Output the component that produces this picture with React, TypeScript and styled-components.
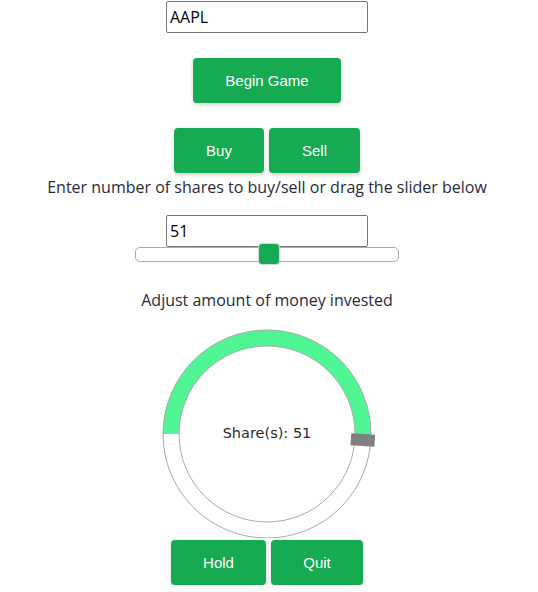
import React from "react";
import styled, { createGlobalStyle } from "styled-components";

const GlobalStyle = createGlobalStyle`
  body {
    margin: 0;
    background: #ffffff;
  }
`;

const Page = styled.div`
  align-items: center;
  display: flex;
  flex-direction: column;
  padding-top: 1px;
  width: 534px;
`;

const TextBox = styled.input`
  border: 1px solid #767676;
  border-radius: 2px;
  box-sizing: border-box;
  color: #000000;
  font-family: "Open Sans", sans-serif;
  font-size: 16px;
  height: 32px;
  margin: 0;
  padding: 0 3px;
  width: 202px;
`;

const GreenButton = styled.button<{ $width: number }>`
  background-color: #16aa53;
  border: none;
  border-radius: 4px;
  box-shadow: 0 2px 4px rgba(0, 0, 0, 0.18);
  color: #ffffff;
  font-family: "Liberation Sans", Arial, sans-serif;
  font-size: 15px;
  height: 45px;
  padding: 0;
  width: ${(p) => p.$width}px;
`;

const ButtonRow = styled.div<{ $top: number }>`
  display: flex;
  gap: 5px;
  margin-top: ${(p) => p.$top}px;
`;

const BeginWrap = styled.div`
  margin-top: 25px;
`;

const Caption = styled.p<{ $top: number }>`
  color: #2a2a3a;
  font-family: "Open Sans", sans-serif;
  font-size: 16px;
  line-height: 20px;
  margin: ${(p) => p.$top}px 0 0;
  white-space: nowrap;
`;

const SharesBox = styled(TextBox)`
  margin-top: 18px;
`;

const Track = styled.div`
  background: #ffffff;
  border: 1px solid #aaaaaa;
  border-radius: 5px;
  box-sizing: border-box;
  height: 15px;
  position: relative;
  width: 264px;
`;

const Thumb = styled.div`
  background: #16aa53;
  border: 1px solid #d8d8d8;
  border-radius: 4px;
  box-sizing: border-box;
  height: 22px;
  position: absolute;
  top: -5px;
  width: 22px;
`;

const Dial = styled.div`
  display: grid;
  margin-top: 16px;
  place-items: center;
  & > * {
    grid-area: 1 / 1;
  }
`;

const DialLabel = styled.span`
  color: #2a2a2a;
  font-family: "DejaVu Sans", Verdana, sans-serif;
  font-size: 14.5px;
  margin-top: 2px;
`;

const polar = (r: number, deg: number) => {
  const a = (deg * Math.PI) / 180;
  return [108 + r * Math.cos(a), 108 + r * Math.sin(a)];
};

const RingArc: React.FC<{ value: number; max: number }> = ({ value, max }) => {
  const outer = 104;
  const inner = 88;
  const start = 180;
  const end = start + (360 * value) / max;
  const large = end - start > 180 ? 1 : 0;
  const [ox1, oy1] = polar(outer, start);
  const [ox2, oy2] = polar(outer, end);
  const [ix1, iy1] = polar(inner, end);
  const [ix2, iy2] = polar(inner, start);
  const d = `M${ox1} ${oy1} A${outer} ${outer} 0 ${large} 1 ${ox2} ${oy2} L${ix1} ${iy1} A${inner} ${inner} 0 ${large} 0 ${ix2} ${iy2} Z`;
  const [hx, hy] = polar(96, end);
  return (
    <svg width="216" height="212" viewBox="0 0 216 212">
      <path d={d} fill="#4ff593" />
      <circle cx="108" cy="108" r={outer} fill="none" stroke="#aaaaaa" strokeWidth="1" />
      <circle cx="108" cy="108" r={inner} fill="none" stroke="#aaaaaa" strokeWidth="1" />
      <rect
        x={hx - 12}
        y={hy - 6}
        width="24"
        height="12"
        fill="#808080"
        transform={`rotate(${end - 360} ${hx} ${hy})`}
      />
    </svg>
  );
};

export default function App() {
  const shares = 51;
  const max = 100;
  const trackWidth = 264;
  const thumbWidth = 22;

  return (
    <Page>
      <GlobalStyle />
      <TextBox defaultValue="AAPL" />
      <BeginWrap>
        <GreenButton $width={148}>Begin Game</GreenButton>
      </BeginWrap>
      <ButtonRow $top={25}>
        <GreenButton $width={90}>Buy</GreenButton>
        <GreenButton $width={91}>Sell</GreenButton>
      </ButtonRow>
      <Caption $top={4}>Enter number of shares to buy/sell or drag the slider below</Caption>
      <SharesBox defaultValue={String(shares)} />
      <Track>
        <Thumb style={{ left: ((trackWidth - thumbWidth) * shares) / max - 1 }} />
      </Track>
      <Caption $top={28}>Adjust amount of money invested</Caption>
      <Dial>
        <RingArc value={shares} max={max} />
        <DialLabel>Share(s): {shares}</DialLabel>
      </Dial>
      <ButtonRow $top={2}>
        <GreenButton $width={95}>Hold</GreenButton>
        <GreenButton $width={92}>Quit</GreenButton>
      </ButtonRow>
    </Page>
  );
}
